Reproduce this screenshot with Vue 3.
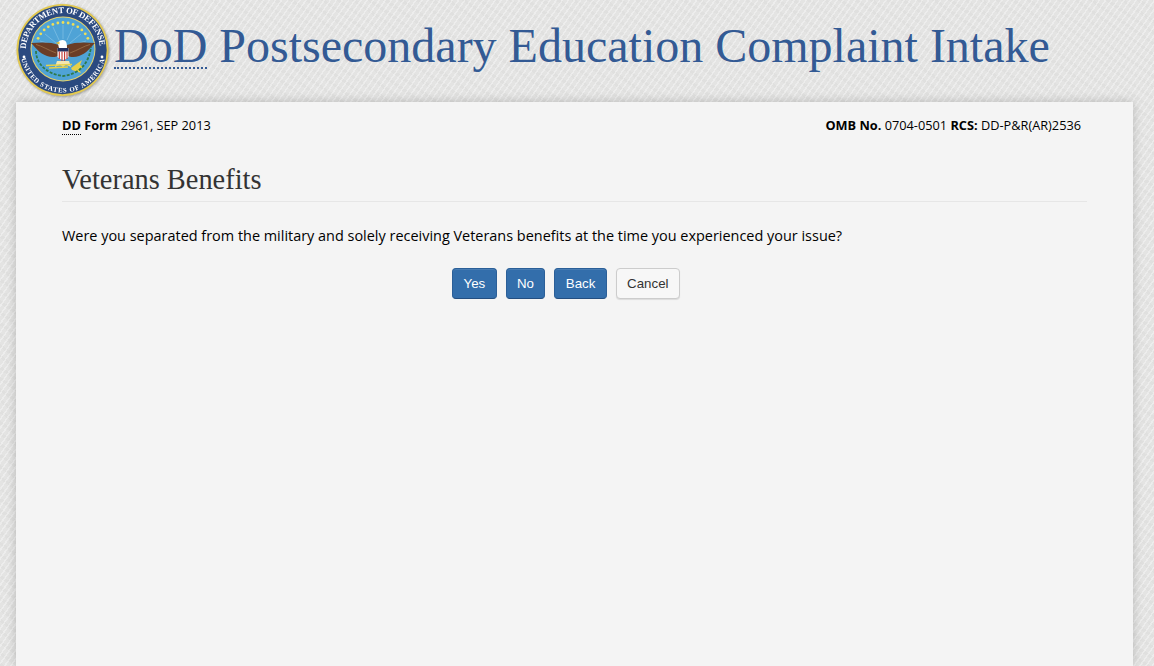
<template>
  <div class="page">
    <header class="site-header">
      <svg class="seal" width="94" height="94" viewBox="0 0 94 94">
        <defs>
          <path id="arcTop" d="M 10 47 A 37 37 0 0 1 84 47" />
          <path id="arcBottom" d="M 4.5 47 A 42.5 42.5 0 0 0 89.5 47" />
        </defs>
        <circle cx="46.5" cy="47" r="46" fill="#e3c94f" />
        <circle cx="46.5" cy="47" r="44.2" fill="#2b4a80" />
        <circle cx="47" cy="46" r="32.5" fill="#e6d26a" />
        <circle cx="47" cy="46" r="31.5" fill="#4fa3d6" />
        <text class="seal-text" font-size="8.6" textLength="111" lengthAdjust="spacing">
          <textPath href="#arcTop" startOffset="1">DEPARTMENT OF DEFENSE</textPath>
        </text>
        <text class="seal-text" font-size="6.8" letter-spacing="0.7">
          <textPath href="#arcBottom" startOffset="50%" text-anchor="middle">UNITED STATES OF AMERICA</textPath>
        </text>
        <circle cx="8" cy="54" r="1.4" fill="#fff" />
        <circle cx="86" cy="54" r="1.4" fill="#fff" />
        <g stroke="#8cc6e8" stroke-width="0.6">
          <path d="M47 22V36M37 24L43 37M57 24L51 37M29 31L40 40M65 31L54 40M24 38L38 42M70 38L56 42" />
        </g>
        <circle v-for="s in stars" :key="s.x" :cx="s.x" :cy="s.y" r="1.4" fill="#f0de55" />
        <path d="M43 42 C36 39 26 39 15 40 C20 45 23 50 31 53 C36 55 41 54 44 52 Z" fill="#6b3d26" />
        <path d="M51 42 C58 39 68 39 79 40 C74 45 71 50 63 53 C58 55 53 54 50 52 Z" fill="#6b3d26" />
        <path d="M20 41.5 C26 43 32 47 40 50M74 41.5 C68 43 62 47 54 50" stroke="#a57a50" stroke-width="0.7" fill="none" />
        <path d="M41.5 45 H52.5 V54 Q47 60 41.5 54 Z" fill="#fff" />
        <path d="M41.5 45 H52.5 V48.5 H41.5 Z" fill="#23305f" />
        <path d="M43.3 48.5V56M46 48.5V58M48.6 48.5V58M51 48.5V56" stroke="#c2332f" stroke-width="1.1" />
        <path d="M43 45 C42 41 41.5 39 44 37.5 C47 36 50 37.5 50.5 40 C51 42 51 44 51 45 Z" fill="#fff" />
        <path d="M43.5 38.5 L39.5 40 L43.5 41.5 Z" fill="#e8c23a" />
        <path d="M41 58 L39 64 L44 61.5 L47 64 L50 61.5 L55 64 L53 58 Z" fill="#f3e6b0" />
        <path d="M30 62.5 L56 61.5 M33 65 L52 64" stroke="#e6d04a" stroke-width="1.3" />
        <path d="M55 65 L66 57 L64 62 L68 64 L63 66 L65 70 L56 67 Z" fill="#e6d04a" />
        <path d="M20 48 C20 60 30 71 47 73 C64 71 73 60 75 44" fill="none" stroke="#2f7a4a" stroke-width="1.8" stroke-dasharray="3 1.4" />
      </svg>
      <h1 class="site-title"><abbr class="title-abbr">DoD</abbr> Postsecondary Education Complaint Intake</h1>
    </header>

    <main class="card">
      <div class="form-meta">
        <div><b><abbr class="meta-abbr">DD</abbr> Form</b> 2961, SEP 2013</div>
        <div><b>OMB No.</b> 0704-0501 <b>RCS:</b> DD-P&amp;R(AR)2536</div>
      </div>

      <h2 class="section-title">Veterans Benefits</h2>

      <p class="question">Were you separated from the military and solely receiving Veterans benefits at the time you experienced your issue?</p>

      <div class="actions">
        <button class="btn primary">Yes</button>
        <button class="btn primary">No</button>
        <button class="btn primary">Back</button>
        <button class="btn plain">Cancel</button>
      </div>
    </main>
  </div>
</template>

<script setup>
// star arc above the eagle
const stars = []
for (let i = 0; i < 13; i++) {
  const a = Math.PI * (1.14 + (0.72 * i) / 12)
  stars.push({ x: 47 + 27.5 * Math.cos(a), y: 47 + 27.5 * Math.sin(a) })
}
</script>

<style>
html,
body {
  margin: 0;
  height: 100%;
  overflow: hidden;
}
</style>

<style scoped>
.page {
  height: 666px;
  overflow: hidden;
  box-sizing: border-box;
  padding: 0 21px 0 16px;
  background-color: #e4e4e3;
  background-image:
    repeating-linear-gradient(125deg, rgba(255, 255, 255, 0.35) 0 1.5px, transparent 1.5px 5px),
    repeating-linear-gradient(35deg, rgba(0, 0, 0, 0.02) 0 3px, transparent 3px 9px);
}

.site-header {
  display: flex;
  align-items: flex-start;
  height: 102px;
  padding-top: 3px;
  box-sizing: border-box;
}

.seal {
  flex: none;
  filter: drop-shadow(1px 1px 1px rgba(0, 0, 0, 0.3));
}

.seal-text {
  font-family: "Liberation Serif", serif;
  font-weight: bold;
  fill: #fff;
}

.site-title {
  margin: 13px 0 0 4px;
  font-family: "Liberation Serif", serif;
  font-weight: normal;
  font-size: 48px;
  line-height: 60px;
  color: #335a94;
  white-space: nowrap;
}

.title-abbr {
  border-bottom: 2px dotted #335a94;
  line-height: 1;
  display: inline-block;
  height: 47px;
  box-sizing: border-box;
}

.card {
  height: 564px;
  box-sizing: border-box;
  padding: 0 46px;
  background: #f4f4f4;
  box-shadow: 0 0 10px rgba(0, 0, 0, 0.2);
  font-family: "Open Sans", sans-serif;
  color: #000;
}

.form-meta {
  display: flex;
  justify-content: space-between;
  padding: 15px 6px 0 0;
  font-size: 12.75px;
  line-height: 17px;
}

.meta-abbr {
  border-bottom: 1px dotted #000;
}

.section-title {
  margin: 30px 0 0;
  padding-bottom: 5px;
  border-bottom: 1px solid #e6e6e6;
  font-family: "Liberation Serif", serif;
  font-weight: normal;
  font-size: 28.4px;
  line-height: 32px;
  color: #333;
}

.question {
  margin: 24px 0 0;
  font-size: 14.44px;
  line-height: 20px;
}

.actions {
  display: flex;
  justify-content: center;
  gap: 9px;
  margin-top: 22px;
  padding-right: 17px;
}

.btn {
  height: 31px;
  padding: 0 10.4px;
  border-radius: 4px;
  border: 1px solid;
  font-family: "Liberation Sans", sans-serif;
  font-size: 13.3px;
}

.primary {
  color: #fff;
  background: #336eab;
  border-color: #2b5f98 #2b5f98 #234e80;
  box-shadow: inset 0 1px 0 rgba(255, 255, 255, 0.1);
}

.plain {
  color: #333;
  background: #f7f7f7;
  border-color: #ccc;
  box-shadow: 0 1px 1px rgba(0, 0, 0, 0.1);
}
</style>
